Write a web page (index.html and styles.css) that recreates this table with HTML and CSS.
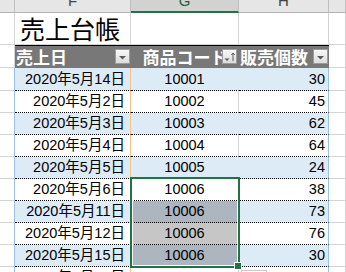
FILE: index.html
```html
<!DOCTYPE html>
<html lang="ja">
<head>
<meta charset="utf-8">
<link rel="stylesheet" href="styles.css">
</head>
<body>
<div class="sheet">
  <div class="row colheads">
    <div class="ch"></div>
    <div class="ch"><span>F</span></div>
    <div class="ch active"><span>G</span></div>
    <div class="ch"><span>H</span></div>
    <div class="ch"></div>
  </div>
  <div class="row title-row">
    <div class="c"></div>
    <div class="c title">売上台帳</div>
    <div class="c"></div>
    <div class="c"></div>
    <div class="c"></div>
  </div>
  <div class="row head-row">
    <div class="c"></div>
    <div class="h h-f">売上日<span class="btn"><svg width="9" height="5" viewBox="0 0 9 5"><path d="M1 1h7l-3.5 3.5z" fill="#5a5a5a"/></svg></span></div>
    <div class="h h-g">商品コード<span class="btn"><svg width="13" height="13" viewBox="0 0 13 13"><path d="M1.5 8.5h5l-2.5 2.5z" fill="#5a5a5a"/><path d="M10 3v8M8.3 5l1.7-2 1.7 2" stroke="#5a5a5a" stroke-width="1" fill="none"/></svg></span></div>
    <div class="h h-h">販売個数<span class="btn"><svg width="9" height="5" viewBox="0 0 9 5"><path d="M1 1h7l-3.5 3.5z" fill="#5a5a5a"/></svg></span></div>
    <div class="c"></div>
  </div>
  <div class="row data band first"><div class="e"></div><div class="f">2020年5月14日</div><div class="g">10001</div><div class="n">30</div><div class="i"></div></div>
  <div class="row data"><div class="e"></div><div class="f">2020年5月2日</div><div class="g">10002</div><div class="n">45</div><div class="i"></div></div>
  <div class="row data band"><div class="e"></div><div class="f">2020年5月3日</div><div class="g">10003</div><div class="n">62</div><div class="i"></div></div>
  <div class="row data"><div class="e"></div><div class="f">2020年5月4日</div><div class="g">10004</div><div class="n">64</div><div class="i"></div></div>
  <div class="row data band"><div class="e"></div><div class="f">2020年5月5日</div><div class="g">10005</div><div class="n">24</div><div class="i"></div></div>
  <div class="row data"><div class="e"></div><div class="f">2020年5月6日</div><div class="g">10006</div><div class="n">38</div><div class="i"></div></div>
  <div class="row data band"><div class="e"></div><div class="f">2020年5月11日</div><div class="g sel-band">10006</div><div class="n">73</div><div class="i"></div></div>
  <div class="row data"><div class="e"></div><div class="f">2020年5月12日</div><div class="g sel-white">10006</div><div class="n">76</div><div class="i"></div></div>
  <div class="row data band"><div class="e"></div><div class="f">2020年5月15日</div><div class="g sel-band">10006</div><div class="n">30</div><div class="i"></div></div>
  <div class="row data"><div class="e"></div><div class="f">2020年5月18日</div><div class="g"></div><div class="n"></div><div class="i"></div></div>

  <div class="selection"></div>
  <div class="handle"></div>
  <div class="autofill"></div>
</div>
</body>
</html>
```
FILE: styles.css
```css
* { box-sizing: border-box; margin: 0; padding: 0; }
html, body { width: 346px; height: 272px; overflow: hidden; background: #fff; }
body { font-family: "Liberation Sans", "Noto Sans CJK JP", sans-serif; color: #000; }

.sheet { position: relative; width: 346px; }

.row {
  display: grid;
  grid-template-columns: 15px 116px 108px 90px 17px;
  height: 22px;
}

.c { border-right: 1px solid #d4d4d4; border-bottom: 1px solid #d4d4d4; }

/* column headers */
.colheads { height: 13px; }
.ch {
  background: #e6e6e6;
  border-right: 1px solid #c0c0c0;
  border-bottom: 1px solid #b4b4b4;
  overflow: hidden;
  display: flex;
  justify-content: center;
  align-items: flex-end;
  font-size: 15px;
  color: #444;
}
.ch span { line-height: 15px; margin-bottom: 4px; }
.ch.active { background: #d2d2d2; border-bottom: 2px solid #217346; color: #1f5f3b; }
.ch.active span { margin-bottom: 3px; }

/* title */
.title-row { height: 32px; }
.title {
  font-family: "Noto Sans CJK JP", sans-serif;
  font-size: 25px;
  line-height: 30px;
  padding-left: 5px;
  white-space: nowrap;
}

/* table header */
.head-row { height: 23px; }
.h {
  position: relative;
  background: #787878;
  border-top: 1px solid #000;
  color: #fff;
  font-family: "Noto Sans CJK JP", sans-serif;
  font-weight: bold;
  font-size: 17px;
  line-height: 21px;
  white-space: nowrap;
}
.h-f { padding-left: 1px; }
.h-g { text-align: center; }
.h-h { padding-left: 1px; }
.btn {
  position: absolute;
  top: 3px;
  right: 1px;
  width: 15px;
  height: 15px;
  border: 1px solid #9c9c9c;
  background: linear-gradient(#f8f8f8, #dcdcdc);
  display: flex;
  align-items: center;
  justify-content: center;
  padding-top: 2px;
}
.h-g .btn { padding-top: 0; right: 2px; }

/* data rows */
.data { font-size: 14.5px; line-height: 21px; white-space: nowrap; }
.data.first { height: 23px; }
.data.first > div { line-height: 22px; }
.e { border-right: 1px solid #9bc2e6; border-bottom: 1px solid #d4d4d4; }
.f { text-align: right; padding-right: 5px; border-right: 1px solid #f2c488; border-bottom: 1px dotted #000; }
.g { text-align: center; border-right: 1px solid #d4d4d4; border-bottom: 1px dotted #000; }
.n { text-align: right; padding-right: 3px; border-right: 1px solid #9bc2e6; border-bottom: 1px dotted #000; }
.i { border-right: 1px solid #d4d4d4; border-bottom: 1px solid #d4d4d4; }

.band .f, .band .g, .band .n { background: #ddebf7; }
.band .g { border-right-color: #ddebf7; }
.g.sel-band { background: #adb5be; border-right-color: #adb5be; }
.g.sel-white { background: #c6c6c6; border-right-color: #c6c6c6; }

/* selection overlay */
.selection {
  position: absolute;
  left: 130px;
  top: 177px;
  width: 110px;
  height: 91px;
  border: 2px solid #217346;
  box-shadow: inset 0 0 0 1px #fff;
}
.handle {
  position: absolute;
  left: 234px;
  top: 262px;
  width: 8px;
  height: 8px;
  background: #217346;
  border: 1px solid #fff;
}
.autofill {
  position: absolute;
  left: 241px;
  top: 270px;
  width: 26px;
  height: 20px;
  border: 1px solid #c8c8c8;
  background: #fff;
}
```
